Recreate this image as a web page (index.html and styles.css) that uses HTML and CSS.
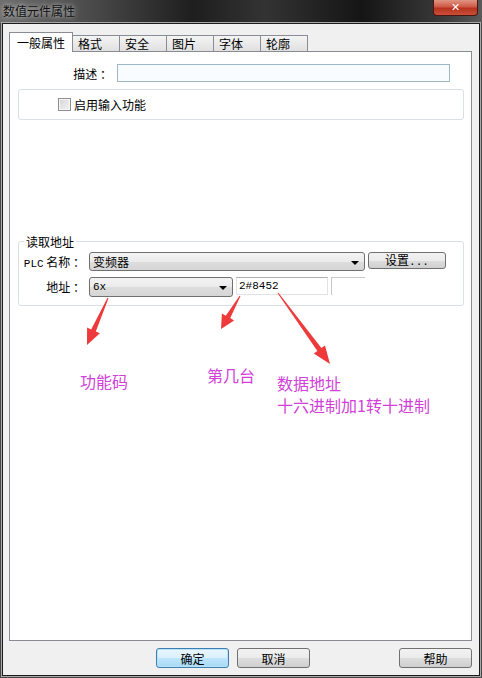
FILE: index.html
```html
<!DOCTYPE html>
<html lang="zh">
<head>
  <meta charset="UTF-8">
  <title>数值元件属性</title>
  <link rel="stylesheet" href="styles.css">
</head>
<body>

  <div class="window">
    <div class="titlebar">
      <span class="title">数值元件属性</span>
      <span class="close">&#x2715;</span>
    </div>

    <div class="dialog">
      <div class="tabs">
        <span class="tab active">一般属性</span>
        <span class="tab">格式</span>
        <span class="tab">安全</span>
        <span class="tab">图片</span>
        <span class="tab">字体</span>
        <span class="tab">轮廓</span>
      </div>

      <div class="panel">
        <div class="desc-row">
          <label class="desc-label">描述 ：</label>
          <span class="textbox desc-input"></span>
        </div>

        <div class="group input-group">
          <span class="checkbox"></span>
          <span>启用输入功能</span>
        </div>

        <fieldset class="group addr-group">
          <legend>读取地址</legend>
          <div class="row first">
            <label class="row-label"><span class="mono">PLC</span> 名称 ：</label>
            <div class="combo plc-combo"><span>变频器</span><span class="arrow"></span></div>
            <button class="btn set-btn">设置<span class="mono">...</span></button>
          </div>
          <div class="row">
            <label class="row-label">地址 ：</label>
            <div class="combo fn-combo"><span class="mono">6x</span><span class="arrow"></span></div>
            <span class="textbox addr-input mono">2#8452</span>
            <span class="textbox extra-input"></span>
          </div>
        </fieldset>
      </div>

      <div class="footer">
        <button class="btn focus">确定</button>
        <button class="btn">取消</button>
        <span class="spacer"></span>
        <button class="btn">帮助</button>
      </div>
    </div>

    <!-- annotations drawn over the dialog -->
    <div class="annot">
      <svg width="482" height="678" viewBox="0 0 482 678">
        <polygon fill="#ee3a3a" points="108.5,298.2 95.8,331.4 99.9,333.3 87,345 87.1,327.5 91.2,329.4 107.5,297.8"/>
        <polygon fill="#ee3a3a" points="240.4,296.2 230.2,318.1 234.1,320.4 221,329 221.9,313.4 225.8,315.7 239.6,295.8"/>
        <polygon fill="#ee3a3a" points="278.4,292.7 321.4,348 325,345.4 330,364 313.8,353.6 317.4,351 277.6,293.3"/>
      </svg>
      <span class="note note-fn">功能码</span>
      <span class="note note-station">第几台</span>
      <span class="note note-data">数据地址<br>十六进制加1转十进制</span>
    </div>
  </div>

</body>
</html>
```

FILE: styles.css
```css
body {
  margin: 0;
  font-family: "Noto Sans CJK SC", "Liberation Sans", sans-serif;
  font-size: 12px;
  color: #000;
  background: #474747;
}

.window {
  position: relative;
  width: 482px;
  height: 678px;
  display: flex;
  flex-direction: column;
  background: #474747;
}

.titlebar {
  height: 23px;
  display: flex;
  justify-content: space-between;
  align-items: flex-start;
  background: linear-gradient(90deg, #6e6e6e 0, #4c4c4c 18%, #1e1e1e 40%, #333 55%, #151515 75%, #3a3a3a 92%, #5a5a5a 100%);
}

.title {
  padding: 3px 0 0 3px;
  line-height: 16px;
  color: #111;
  text-shadow: 0 0 4px rgba(255, 255, 255, 0.6), 0 0 8px rgba(255, 255, 255, 0.4);
}

.close {
  width: 45px;
  height: 16px;
  margin-right: 4px;
  box-sizing: border-box;
  border: 1px solid #4a1710;
  border-top: none;
  border-radius: 0 0 4px 4px;
  background: linear-gradient(#e09585 0, #cf5a45 45%, #b8321e 55%, #c8503a 100%);
  color: #fff;
  font-family: "DejaVu Sans", sans-serif;
  font-weight: bold;
  font-size: 11px;
  line-height: 15px;
  text-align: center;
}

.dialog {
  flex: 1;
  display: flex;
  flex-direction: column;
  margin: 0 2px 2px;
  padding: 8px 7px 0 6px;
  background: #f0f0f0;
  border: 1px solid #1c1c1c;
  box-shadow: 0 0 0 1px #a8a8a8;
}

.tabs {
  display: flex;
  align-items: flex-end;
  position: relative;
  z-index: 1;
}

.tab {
  width: 48px;
  height: 16px;
  margin-left: -1px;
  padding: 0 5px;
  box-sizing: border-box;
  border: 1px solid #898c95;
  border-bottom: none;
  background: linear-gradient(#f4f4f4, #e0e0e0);
  line-height: 16px;
  white-space: nowrap;
}

.tab.active {
  width: 64px;
  height: 20px;
  margin-left: 0;
  margin-bottom: -1px;
  padding-left: 7px;
  background: #fff;
  line-height: 19px;
}

.panel {
  flex: 1;
  border: 1px solid #898c95;
  background: #fff;
}

.desc-row {
  display: flex;
  align-items: center;
  margin-top: 12px;
}

.desc-label {
  width: 102px;
  margin-right: 5px;
  text-align: right;
}

.textbox {
  display: block;
  height: 18px;
  box-sizing: border-box;
  border: 1px solid #abadb3;
  border-top-color: #a5acb5;
  background: #fff;
  line-height: 16px;
  padding-left: 2px;
}

.desc-input {
  width: 333px;
  border-color: #9fb6c8;
  background: #f8fcff;
}

.group {
  margin: 0 7px 0 8px;
  border: 1px solid #d9dfe4;
  border-radius: 3px;
}

.input-group {
  display: flex;
  align-items: center;
  height: 31px;
  margin-top: 7px;
  box-sizing: border-box;
}

.checkbox {
  width: 11px;
  height: 11px;
  margin: 0 3px 0 39px;
  border: 1px solid #8f8f8f;
  background: linear-gradient(135deg, #d4d4d4, #f4f4f4);
  box-shadow: inset 0 0 0 1px #f6f6f6;
}

.addr-group {
  margin-top: 115px;
  padding: 0 0 8px;
  min-width: 0;
}

legend {
  margin-left: 5px;
  padding: 0 2px;
  line-height: 13px;
}

.row {
  display: flex;
  align-items: flex-start;
  margin-top: 3px;
}

.row.first {
  margin-top: 4px;
}

.row-label {
  width: 66px;
  margin-right: 4px;
  text-align: right;
  line-height: 19px;
}

.mono {
  font-family: "Liberation Mono", monospace;
  font-size: 11px;
}

.combo {
  display: flex;
  justify-content: space-between;
  align-items: center;
  height: 19px;
  box-sizing: border-box;
  padding: 0 5px 0 3px;
  border: 1px solid #707070;
  border-radius: 3px;
  background: linear-gradient(#f3f3f3 0, #ebebeb 50%, #dddddd 51%, #d6d6d6 100%);
}

.plc-combo {
  width: 276px;
}

.fn-combo {
  width: 144px;
  height: 20px;
}

.arrow {
  width: 0;
  height: 0;
  border-left: 4px solid transparent;
  border-right: 4px solid transparent;
  border-top: 4px solid #000;
  margin-top: 2px;
}

.btn {
  height: 20px;
  padding: 0;
  box-sizing: border-box;
  border: 1px solid #707070;
  border-radius: 3px;
  background: linear-gradient(#f2f2f2 0, #ebebeb 50%, #dddddd 51%, #cfcfcf 100%);
  font-family: inherit;
  font-size: 12px;
  line-height: 17px;
  width: 73px;
  color: #000;
}

.set-btn {
  width: 78px;
  height: 17px;
  margin-left: 3px;
  line-height: 14px;
}

.addr-input {
  width: 92px;
  margin-left: 3px;
  border-color: #e2e3ea;
  border-top-color: #abadb3;
}

.extra-input {
  width: 34px;
  margin-left: 3px;
  border-right: none;
  border-bottom: none;
  border-color: #c9c9c9;
}

.footer {
  display: flex;
  align-items: center;
  height: 34px;
  padding-left: 147px;
}

.footer .btn + .btn {
  margin-left: 8px;
}

.spacer {
  flex: 1;
}

.btn.focus {
  border-color: #3c7fb1;
  box-shadow: inset 0 0 0 1px #b8e0f8;
  background: linear-gradient(#eaf6fd 0, #d9f0fc 50%, #bee6fd 51%, #a7d9f5 100%);
}

.annot {
  position: absolute;
  inset: 0;
  pointer-events: none;
}

.annot svg {
  position: absolute;
  left: 0;
  top: 0;
}

.note {
  position: absolute;
  color: #d03fd8;
  font-size: 16px;
  line-height: 22px;
  white-space: nowrap;
}

.note-fn {
  left: 80px;
  top: 370px;
}

.note-station {
  left: 207px;
  top: 364px;
}

.note-data {
  left: 277px;
  top: 372px;
}
```
